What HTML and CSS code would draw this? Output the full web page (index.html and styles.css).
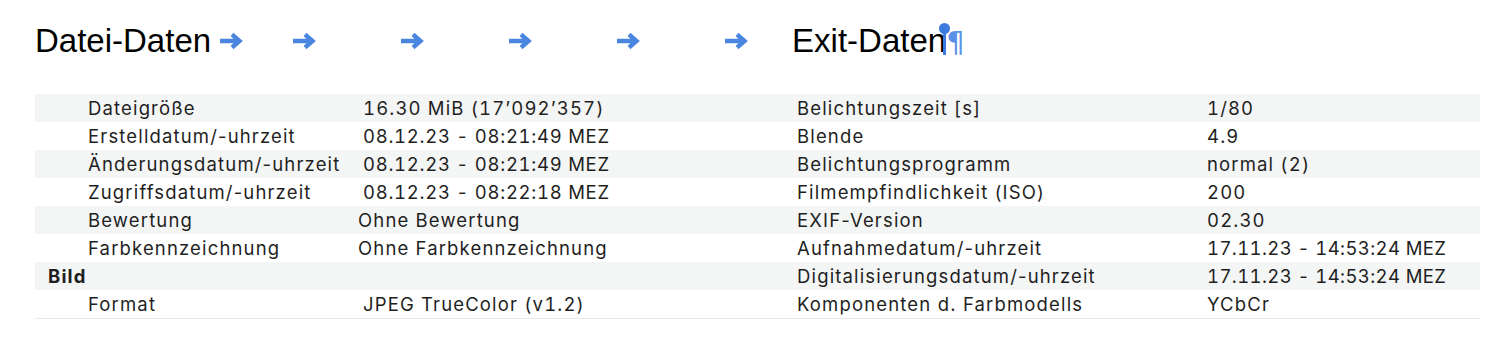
FILE: index.html
```html
<!DOCTYPE html>
<html lang="de">
<head>
<meta charset="utf-8">
<title>Datei-Daten</title>
<link rel="stylesheet" href="styles.css">
</head>
<body>
<div class="heading">
  <span class="title">Datei-Daten</span>
  <svg class="arrow a1" viewBox="0 0 24 18"><path d="M0 9H19M12 2.5L19.5 9L12 15.5"/></svg>
  <svg class="arrow a2" viewBox="0 0 24 18"><path d="M0 9H19M12 2.5L19.5 9L12 15.5"/></svg>
  <svg class="arrow a3" viewBox="0 0 24 18"><path d="M0 9H19M12 2.5L19.5 9L12 15.5"/></svg>
  <svg class="arrow a3" viewBox="0 0 24 18"><path d="M0 9H19M12 2.5L19.5 9L12 15.5"/></svg>
  <svg class="arrow a3" viewBox="0 0 24 18"><path d="M0 9H19M12 2.5L19.5 9L12 15.5"/></svg>
  <svg class="arrow a3" viewBox="0 0 24 18"><path d="M0 9H19M12 2.5L19.5 9L12 15.5"/></svg>
  <span class="title exit">Exit-Daten<span class="caret"></span><span class="pilcrow">¶</span></span>
</div>
<div class="table">
  <div class="row shade"><span class="lab">Dateigröße</span><span class="val">16.30 MiB (17’092’357)</span><span class="rlab">Belichtungszeit [s]</span><span class="rval">1/80</span></div>
  <div class="row"><span class="lab">Erstelldatum/-uhrzeit</span><span class="val date">08.12.23 - 08:21:49 MEZ</span><span class="rlab">Blende</span><span class="rval">4.9</span></div>
  <div class="row shade"><span class="lab">Änderungsdatum/-uhrzeit</span><span class="val date">08.12.23 - 08:21:49 MEZ</span><span class="rlab">Belichtungsprogramm</span><span class="rval">normal (2)</span></div>
  <div class="row"><span class="lab">Zugriffsdatum/-uhrzeit</span><span class="val date">08.12.23 - 08:22:18 MEZ</span><span class="rlab">Filmempfindlichkeit (ISO)</span><span class="rval">200</span></div>
  <div class="row shade"><span class="lab">Bewertung</span><span class="val pull">Ohne Bewertung</span><span class="rlab">EXIF-Version</span><span class="rval">02.30</span></div>
  <div class="row"><span class="lab">Farbkennzeichnung</span><span class="val pull">Ohne Farbkennzeichnung</span><span class="rlab">Aufnahmedatum/-uhrzeit</span><span class="rval rdate">17.11.23 - 14:53:24 MEZ</span></div>
  <div class="row shade"><span class="lab group">Bild</span><span class="val"></span><span class="rlab">Digitalisierungsdatum/-uhrzeit</span><span class="rval rdate">17.11.23 - 14:53:24 MEZ</span></div>
  <div class="row last"><span class="lab">Format</span><span class="val">JPEG TrueColor (v1.2)</span><span class="rlab">Komponenten d. Farbmodells</span><span class="rval">YCbCr</span></div>
</div>
</body>
</html>
```
FILE: styles.css
```css
html, body {
  margin: 0;
  padding: 0;
  background: #ffffff;
}

.heading {
  display: flex;
  align-items: center;
  padding: 21px 0 0 35px;
  height: 40px;
}

.title {
  font-family: "Liberation Sans", Arial, sans-serif;
  font-size: 33px;
  color: #000;
  line-height: 36px;
  white-space: nowrap;
}

.exit {
  margin-left: 43px;
  display: inline-flex;
  align-items: flex-start;
}

.arrow {
  width: 24px;
  height: 18px;
  margin-top: 0;
  fill: none;
  stroke: #4a86e0;
  stroke-width: 4.4;
  stroke-linejoin: miter;
}

.a1 { margin-left: 9px; }
.a2 { margin-left: 49px; }
.a3 { margin-left: 84px; }

.caret {
  position: relative;
  display: inline-block;
  width: 3px;
  height: 26px;
  margin: 6px 0 0 -3px;
  background: #3b7be0;
}

.caret::before {
  content: "";
  position: absolute;
  left: -4px;
  top: -6px;
  width: 11px;
  height: 11px;
  border-radius: 50%;
  background: #3b7be0;
}

.pilcrow {
  font-family: "DejaVu Sans", sans-serif;
  font-size: 29px;
  color: #5b90e8;
  line-height: 30px;
  margin-left: 0;
  margin-top: 4px;
}

.table {
  margin: 33px 30px 0 35px;
  border-bottom: 1px solid #e8e9e9;
  font-family: "Inter", "DejaVu Sans", sans-serif;
  font-size: 18.5px;
  letter-spacing: 1.15px;
  color: #1f1f1f;
}

.row {
  display: grid;
  grid-template-columns: 328px 434px 410px 1fr;
  height: 28px;
  line-height: 28px;
  white-space: nowrap;
}

.shade {
  background: #f4f5f5;
}

.lab {
  padding-left: 53px;
}

.val,
.rval {
  font-variant-numeric: tabular-nums;
}

.date {
  letter-spacing: 0.72px;
}

.rdate {
  letter-spacing: 0.4px;
}

.group {
  padding-left: 13px;
  font-weight: 700;
}

.pull {
  margin-left: -5px;
}
```
